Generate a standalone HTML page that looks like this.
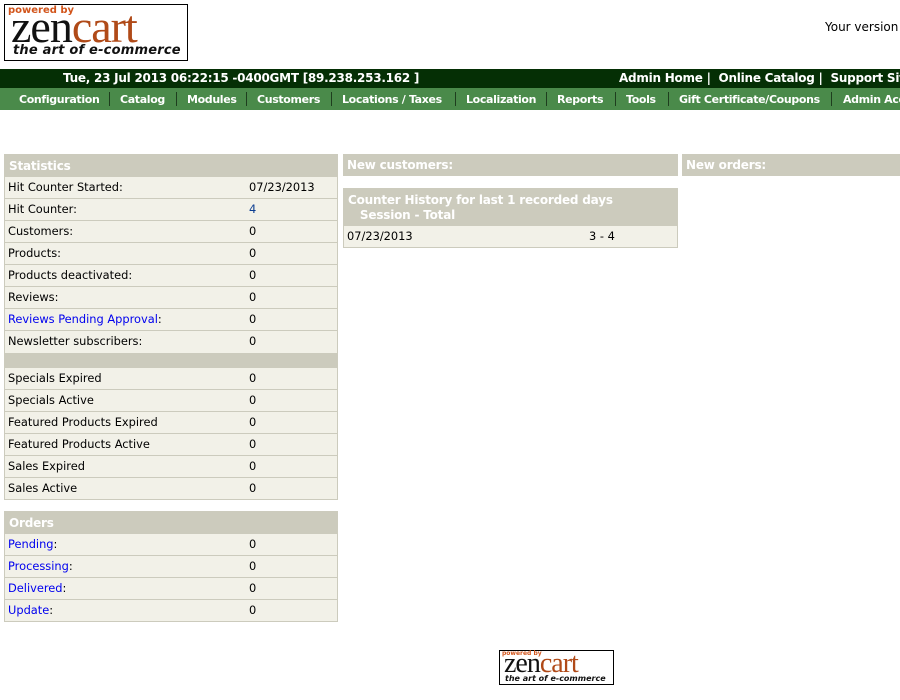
<!DOCTYPE html>
<html><head><meta charset="utf-8"><style>
*{margin:0;padding:0;box-sizing:border-box}
body{width:900px;height:700px;background:#fff;font-family:"DejaVu Sans",Verdana,sans-serif;font-size:11.4px;color:#000;position:relative;overflow:hidden}
.abs{position:absolute}
.logo{left:4px;top:4px;width:184px;height:57px;border:1px solid #000;background:#fff}
.top{left:0;top:69px;width:900px;height:19px;background:#052f05;color:#fff;font-weight:bold;font-size:12px;white-space:nowrap;letter-spacing:-0.25px}
.nav{left:0;top:88px;width:900px;height:22px;background:#4a8a4a;color:#fff;font-weight:bold;font-size:11px;white-space:nowrap;letter-spacing:-0.35px}
.nav span{position:absolute;top:5px}
.nav i{position:absolute;top:4px;width:1px;height:14px;background:#1e3e1e}
.box{border:1px solid #cccbbd;background:#f2f1e8}
.hd{background:#cccbbd;color:#fff;font-weight:bold;font-size:12px;height:22px;line-height:22px;padding-left:4px;letter-spacing:-0.2px}
.row{height:22px;line-height:21px;border-bottom:1px solid #cccbbd;position:relative;padding-left:3px}
.row:last-child{border-bottom:none}
.row b{font-weight:normal;position:absolute;left:244px;top:0}
a{color:#0000ee;text-decoration:none}
</style></head><body>
<div class="abs logo">
<div class="abs" style="left:3px;top:0;color:#d2541a;font-weight:bold;font-size:10px">powered by</div>
<div class="abs" style="left:6px;top:-3px;font-family:'Liberation Serif',serif;font-size:46px;letter-spacing:-1px;line-height:50px"><span style="color:#111">zen</span><span style="color:#b04a18">cart</span></div>
<div class="abs" style="left:8px;top:38px;font-weight:bold;font-style:italic;font-size:13px;color:#111;letter-spacing:0.2px">the art of e-commerce</div>
</div>
<div class="abs" style="left:825px;top:20px;font-size:12px;white-space:nowrap">Your version</div>
<div class="abs top"><span class="abs" style="left:63px;top:2px">Tue, 23 Jul 2013 06:22:15 -0400GMT [89.238.253.162 ]</span><span class="abs" style="left:619px;top:2px">Admin Home |&nbsp; Online Catalog |&nbsp; Support Site</span></div>
<div class="abs nav">
<span style="left:19px">Configuration</span><i style="left:109px"></i>
<span style="left:120px">Catalog</span><i style="left:176px"></i>
<span style="left:187px">Modules</span><i style="left:246px"></i>
<span style="left:257px">Customers</span><i style="left:331px"></i>
<span style="left:342px">Locations / Taxes</span><i style="left:455px"></i>
<span style="left:466px">Localization</span><i style="left:546px"></i>
<span style="left:557px">Reports</span><i style="left:615px"></i>
<span style="left:626px">Tools</span><i style="left:668px"></i>
<span style="left:679px">Gift Certificate/Coupons</span><i style="left:831px"></i>
<span style="left:843px">Admin Access</span>
</div>

<div class="abs box" style="left:4px;top:154px;width:334px;height:346px">
<div class="hd">Statistics</div>
<div class="row">Hit Counter Started:<b>07/23/2013</b></div>
<div class="row">Hit Counter:<b style="color:#0b3d91">4</b></div>
<div class="row">Customers:<b>0</b></div>
<div class="row">Products:<b>0</b></div>
<div class="row">Products deactivated:<b>0</b></div>
<div class="row">Reviews:<b>0</b></div>
<div class="row"><a>Reviews Pending Approval</a>:<b>0</b></div>
<div class="row" style="border-bottom:none">Newsletter subscribers:<b>0</b></div>
<div style="height:15px;background:#cccbbd"></div>
<div class="row">Specials Expired<b>0</b></div>
<div class="row">Specials Active<b>0</b></div>
<div class="row">Featured Products Expired<b>0</b></div>
<div class="row">Featured Products Active<b>0</b></div>
<div class="row">Sales Expired<b>0</b></div>
<div class="row">Sales Active<b>0</b></div>
</div>

<div class="abs box" style="left:4px;top:511px;width:334px;height:111px">
<div class="hd">Orders</div>
<div class="row"><a>Pending</a>:<b>0</b></div>
<div class="row"><a>Processing</a>:<b>0</b></div>
<div class="row"><a>Delivered</a>:<b>0</b></div>
<div class="row"><a>Update</a>:<b>0</b></div>
</div>

<div class="abs" style="left:343px;top:154px;width:335px"><div class="hd">New customers:</div></div>
<div class="abs box" style="left:343px;top:188px;width:335px;height:60px">
<div class="hd" style="height:37px;line-height:15px;padding-top:4px">Counter History for last 1 recorded days<br>&nbsp;&nbsp;&nbsp;Session - Total</div>
<div class="row">07/23/2013<b style="left:245px">3 - 4</b></div>
</div>
<div class="abs" style="left:682px;top:154px;width:218px"><div class="hd">New orders:</div></div>

<div class="abs" style="left:499px;top:650px;width:115px;height:35px;border:1px solid #000;background:#fff">
<div class="abs" style="left:2px;top:-1px;color:#d2541a;font-weight:bold;font-size:6px">powered by</div>
<div class="abs" style="left:4px;top:-3px;font-family:'Liberation Serif',serif;font-size:28px;line-height:31px;letter-spacing:-1px"><span style="color:#111">zen</span><span style="color:#b04a18">cart</span></div>
<div class="abs" style="left:5px;top:23px;font-weight:bold;font-style:italic;font-size:8px;color:#111">the art of e-commerce</div>
</div>
</body></html>
